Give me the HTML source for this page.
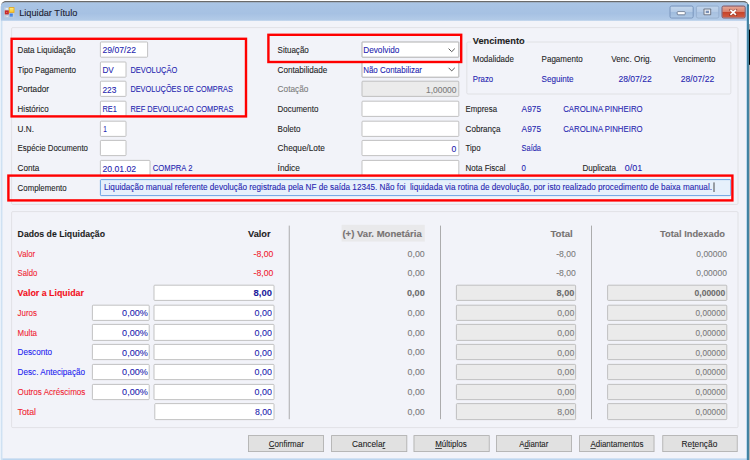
<!DOCTYPE html>
<html><head><meta charset="utf-8"><title>Liquidar Título</title>
<style>
html,body{margin:0;padding:0;background:#fff;overflow:hidden;}
body{width:750px;height:460px;position:relative;--bg:#f2f3f9;}
#root{position:absolute;left:0;top:0;width:937.5px;height:575.0px;transform:scale(0.8);transform-origin:0 0;font-family:"Liberation Sans",sans-serif;overflow:hidden;}
#root div,#root span,#root svg{position:absolute;}
#root span{white-space:pre;line-height:1;-webkit-text-stroke:0.12px currentColor;}
u{text-decoration:underline;text-underline-offset:1px;}
</style></head><body><div id="root">
<!-- window frame -->
<div style="left:935.75px;top:30.00px;width:2.50px;height:545.00px;background:#b9b3b3;"></div>
<div style="left:935.75px;top:36.88px;width:2.50px;height:44.38px;background:#000;"></div>
<div style="left:1.12px;top:1.12px;width:934.88px;height:587.50px;box-sizing:border-box;border-radius:6.88px 6.88px 0 0;background:#bdd6ef;border-top:2px solid #6a6a6a;"></div>
<div style="left:1.25px;top:3.00px;width:933.25px;height:23.38px;border-radius:5.62px 5.62px 0 0;background:linear-gradient(#aac5e5 0%,#a8c3e4 30%,#a6c1e3 60%,#b4cce8 100%);"></div>
<div style="left:933.12px;top:7.50px;width:1.25px;height:567.50px;background:#86c4ea;"></div>
<div style="left:934.25px;top:5.00px;width:1.75px;height:570.00px;background:#256e8e;border-radius:1.25px 3.75px 0 0;"></div>
<div style="left:1.12px;top:26.25px;width:2.25px;height:550.00px;background:linear-gradient(90deg,#c4dbf0,#dde9f6);"></div>
<div style="left:3.25px;top:26.25px;width:929.88px;height:546.75px;background:var(--bg);"></div>
<!-- icon -->
<div style="left:5.38px;top:8.75px;width:13.00px;height:13.00px;background:#c9d0da;opacity:.7;"></div>
<div style="left:7.00px;top:10.25px;width:2.75px;height:2.00px;background:#eef3f9;opacity:.8;"></div>
<div style="left:7.50px;top:19.50px;width:2.75px;height:1.50px;background:#eef3f9;opacity:.8;"></div>
<div style="left:11.25px;top:9.38px;width:6.88px;height:6.75px;background:#e9a60c;"></div>
<div style="left:12.25px;top:10.38px;width:4.88px;height:4.75px;background:linear-gradient(#fdeb82,#f7c52c);"></div>
<div style="left:6.25px;top:12.88px;width:4.38px;height:5.50px;background:#c7282a;"></div>
<div style="left:7.75px;top:14.88px;width:1.38px;height:1.38px;background:#f4b0a8;"></div>
<div style="left:11.50px;top:17.25px;width:4.50px;height:3.75px;background:linear-gradient(#3a74dc,#5c9cf0);"></div>
<!-- caption buttons -->
<div style="left:836.75px;top:6.75px;width:30.00px;height:16.62px;box-sizing:border-box;border:1px solid #6f8cb4;border-radius:2.5px;background:linear-gradient(#c3d6ec 0%,#b3cae6 48%,#9fbbdd 52%,#acc6e4 100%);"></div>
<div style="left:846.00px;top:14.38px;width:11.25px;height:4.88px;box-sizing:border-box;border:1px solid #5f6f86;border-radius:1.5px;background:#fff;"></div>
<div style="left:869.50px;top:6.75px;width:29.25px;height:16.62px;box-sizing:border-box;border:1px solid #93abc9;border-radius:2.5px;background:linear-gradient(#c1d4eb 0%,#b4cae6 48%,#a7c0e0 52%,#b0c8e5 100%);"></div>
<svg style="left:877.50px;top:8.75px;width:12.50px;height:12.50px" viewBox="0 0 10 10"><rect x="1.1" y="1.3" width="7.7" height="6.8" rx=".8" fill="#6e7686"/><rect x="2.1" y="2.3" width="5.7" height="4.8" fill="#eef1f5"/><rect x="3.3" y="3.5" width="3.3" height="2.4" fill="#7a90b6"/></svg>
<div style="left:901.62px;top:6.75px;width:30.25px;height:16.62px;box-sizing:border-box;border:1px solid #7c4048;border-radius:2.5px;background:linear-gradient(#e6a898 0%,#da826e 46%,#c5432a 52%,#d25c42 100%);"></div>
<svg style="left:911.25px;top:10.50px;width:11.00px;height:9.00px" viewBox="0 0 8.8 7.2"><path d="M1.5 1 L7.3 6.2 M7.3 1 L1.5 6.2" stroke="#6a281e" stroke-width="2.6" stroke-linecap="round" opacity=".5"/><path d="M1.6 1.1 L7.2 6.1 M7.2 1.1 L1.6 6.1" stroke="#fff" stroke-width="1.6" stroke-linecap="butt"/></svg>
<div style='left:13.75px;top:34.00px;width:909.00px;height:222.00px;box-sizing:border-box;border:1.25px solid #dcdce0;border-radius:2px;'></div>
<div style='left:13.75px;top:263.75px;width:908.75px;height:270.75px;box-sizing:border-box;border:1.25px solid #dcdce0;border-radius:2px;'></div>
<div style='left:125.25px;top:51.88px;width:59.50px;height:20.12px;box-sizing:border-box;border:1.25px solid #b4b4b4;border-radius:1.5px;background:#fff;'></div>
<div style='left:125.25px;top:76.50px;width:32.25px;height:20.13px;box-sizing:border-box;border:1.25px solid #b4b4b4;border-radius:1.5px;background:#fff;'></div>
<div style='left:125.25px;top:101.12px;width:32.25px;height:20.12px;box-sizing:border-box;border:1.25px solid #b4b4b4;border-radius:1.5px;background:#fff;'></div>
<div style='left:125.25px;top:125.75px;width:32.25px;height:20.12px;box-sizing:border-box;border:1.25px solid #b4b4b4;border-radius:1.5px;background:#fff;'></div>
<div style='left:125.25px;top:150.50px;width:32.25px;height:20.12px;box-sizing:border-box;border:1.25px solid #b4b4b4;border-radius:1.5px;background:#fff;'></div>
<div style='left:125.25px;top:175.25px;width:32.25px;height:20.12px;box-sizing:border-box;border:1.25px solid #b4b4b4;border-radius:1.5px;background:#fff;'></div>
<div style='left:125.25px;top:200.00px;width:62.75px;height:20.12px;box-sizing:border-box;border:1.25px solid #b4b4b4;border-radius:1.5px;background:#fff;'></div>
<div style='left:125.25px;top:224.12px;width:788.75px;height:21.00px;box-sizing:border-box;border:1.25px solid #4a8fdc;border-radius:1.5px;background:#e6f0fb;'></div>
<div style='left:891.50px;top:227.50px;width:1.12px;height:12.00px;background:#222;'></div>
<div style='left:451.50px;top:51.88px;width:122.00px;height:20.12px;box-sizing:border-box;border:1.25px solid #9c9c9c;border-radius:1px;background:#fff;'></div>
<div style='left:451.50px;top:76.50px;width:122.00px;height:20.13px;box-sizing:border-box;border:1.25px solid #9c9c9c;border-radius:1px;background:#fff;'></div>
<div style='left:451.50px;top:101.12px;width:122.00px;height:20.12px;box-sizing:border-box;border:1.25px solid #b4b4b4;border-radius:1.5px;background:#ebebeb;'></div>
<div style='left:451.50px;top:125.75px;width:122.00px;height:20.12px;box-sizing:border-box;border:1.25px solid #b4b4b4;border-radius:1.5px;background:#fff;'></div>
<div style='left:451.50px;top:150.50px;width:122.00px;height:20.12px;box-sizing:border-box;border:1.25px solid #b4b4b4;border-radius:1.5px;background:#fff;'></div>
<div style='left:451.50px;top:175.25px;width:122.00px;height:20.12px;box-sizing:border-box;border:1.25px solid #b4b4b4;border-radius:1.5px;background:#fff;'></div>
<div style='left:451.50px;top:200.00px;width:122.00px;height:20.12px;box-sizing:border-box;border:1.25px solid #b4b4b4;border-radius:1.5px;background:#fff;'></div>
<svg style='left:559.38px;top:58.62px;width:11.25px;height:7.50px' viewBox='0 0 9 6'><path d='M1.4 1.4 L4.5 4.5 L7.6 1.4' fill='none' stroke='#555' stroke-width='1'/></svg>
<svg style='left:559.38px;top:83.25px;width:11.25px;height:7.50px' viewBox='0 0 9 6'><path d='M1.4 1.4 L4.5 4.5 L7.6 1.4' fill='none' stroke='#555' stroke-width='1'/></svg>
<div style='left:583.00px;top:51.50px;width:330.75px;height:66.38px;box-sizing:border-box;border:1.25px solid #dcdce0;border-radius:2px;'></div>
<div style='left:588.75px;top:45.00px;width:69.38px;height:15.00px;background:var(--bg);'></div>
<div style='left:427.00px;top:281.25px;width:104.00px;height:20.50px;background:#e9e9eb;'></div>
<div style='left:360.81px;top:282.00px;width:1.50px;height:242.00px;background:#9a9a9a;'></div>
<div style='left:549.81px;top:282.00px;width:1.50px;height:242.00px;background:#9a9a9a;'></div>
<div style='left:738.81px;top:282.00px;width:1.50px;height:242.00px;background:#9a9a9a;'></div>
<div style='left:191.50px;top:355.94px;width:151.00px;height:20.13px;box-sizing:border-box;border:1.25px solid #b4b4b4;border-radius:1.5px;background:#fff;'></div>
<div style='left:570.00px;top:355.94px;width:150.25px;height:20.13px;box-sizing:border-box;border:1.25px solid #b4b4b4;border-radius:1.5px;background:#ebebeb;'></div>
<div style='left:758.75px;top:355.94px;width:150.25px;height:20.13px;box-sizing:border-box;border:1.25px solid #b4b4b4;border-radius:1.5px;background:#ebebeb;'></div>
<div style='left:191.50px;top:380.69px;width:151.00px;height:20.13px;box-sizing:border-box;border:1.25px solid #b4b4b4;border-radius:1.5px;background:#fff;'></div>
<div style='left:115.00px;top:380.69px;width:72.25px;height:20.13px;box-sizing:border-box;border:1.25px solid #b4b4b4;border-radius:1.5px;background:#fff;'></div>
<div style='left:570.00px;top:380.69px;width:150.25px;height:20.13px;box-sizing:border-box;border:1.25px solid #b4b4b4;border-radius:1.5px;background:#ebebeb;'></div>
<div style='left:758.75px;top:380.69px;width:150.25px;height:20.13px;box-sizing:border-box;border:1.25px solid #b4b4b4;border-radius:1.5px;background:#ebebeb;'></div>
<div style='left:191.50px;top:405.44px;width:151.00px;height:20.13px;box-sizing:border-box;border:1.25px solid #b4b4b4;border-radius:1.5px;background:#fff;'></div>
<div style='left:115.00px;top:405.44px;width:72.25px;height:20.13px;box-sizing:border-box;border:1.25px solid #b4b4b4;border-radius:1.5px;background:#fff;'></div>
<div style='left:570.00px;top:405.44px;width:150.25px;height:20.13px;box-sizing:border-box;border:1.25px solid #b4b4b4;border-radius:1.5px;background:#ebebeb;'></div>
<div style='left:758.75px;top:405.44px;width:150.25px;height:20.13px;box-sizing:border-box;border:1.25px solid #b4b4b4;border-radius:1.5px;background:#ebebeb;'></div>
<div style='left:191.50px;top:430.19px;width:151.00px;height:20.13px;box-sizing:border-box;border:1.25px solid #b4b4b4;border-radius:1.5px;background:#fff;'></div>
<div style='left:115.00px;top:430.19px;width:72.25px;height:20.13px;box-sizing:border-box;border:1.25px solid #b4b4b4;border-radius:1.5px;background:#fff;'></div>
<div style='left:570.00px;top:430.19px;width:150.25px;height:20.13px;box-sizing:border-box;border:1.25px solid #b4b4b4;border-radius:1.5px;background:#ebebeb;'></div>
<div style='left:758.75px;top:430.19px;width:150.25px;height:20.13px;box-sizing:border-box;border:1.25px solid #b4b4b4;border-radius:1.5px;background:#ebebeb;'></div>
<div style='left:191.50px;top:454.94px;width:151.00px;height:20.13px;box-sizing:border-box;border:1.25px solid #b4b4b4;border-radius:1.5px;background:#fff;'></div>
<div style='left:115.00px;top:454.94px;width:72.25px;height:20.13px;box-sizing:border-box;border:1.25px solid #b4b4b4;border-radius:1.5px;background:#fff;'></div>
<div style='left:570.00px;top:454.94px;width:150.25px;height:20.13px;box-sizing:border-box;border:1.25px solid #b4b4b4;border-radius:1.5px;background:#ebebeb;'></div>
<div style='left:758.75px;top:454.94px;width:150.25px;height:20.13px;box-sizing:border-box;border:1.25px solid #b4b4b4;border-radius:1.5px;background:#ebebeb;'></div>
<div style='left:191.50px;top:479.69px;width:151.00px;height:20.13px;box-sizing:border-box;border:1.25px solid #b4b4b4;border-radius:1.5px;background:#fff;'></div>
<div style='left:115.00px;top:479.69px;width:72.25px;height:20.13px;box-sizing:border-box;border:1.25px solid #b4b4b4;border-radius:1.5px;background:#fff;'></div>
<div style='left:570.00px;top:479.69px;width:150.25px;height:20.13px;box-sizing:border-box;border:1.25px solid #b4b4b4;border-radius:1.5px;background:#ebebeb;'></div>
<div style='left:758.75px;top:479.69px;width:150.25px;height:20.13px;box-sizing:border-box;border:1.25px solid #b4b4b4;border-radius:1.5px;background:#ebebeb;'></div>
<div style='left:193.00px;top:504.44px;width:149.50px;height:20.13px;box-sizing:border-box;border:1.25px solid #b4b4b4;border-radius:1.5px;background:#fff;'></div>
<div style='left:570.00px;top:504.44px;width:150.25px;height:20.13px;box-sizing:border-box;border:1.25px solid #b4b4b4;border-radius:1.5px;background:#ebebeb;'></div>
<div style='left:758.75px;top:504.44px;width:150.25px;height:20.13px;box-sizing:border-box;border:1.25px solid #b4b4b4;border-radius:1.5px;background:#ebebeb;'></div>
<div style='left:310.38px;top:544.12px;width:94.87px;height:21.00px;box-sizing:border-box;border:1.25px solid #adadad;background:#e1e1e1;'></div>
<div style='left:413.75px;top:544.12px;width:95.00px;height:21.00px;box-sizing:border-box;border:1.25px solid #adadad;background:#e1e1e1;'></div>
<div style='left:517.25px;top:544.12px;width:94.87px;height:21.00px;box-sizing:border-box;border:1.25px solid #adadad;background:#e1e1e1;'></div>
<div style='left:620.38px;top:544.12px;width:94.50px;height:21.00px;box-sizing:border-box;border:1.25px solid #adadad;background:#e1e1e1;'></div>
<div style='left:723.75px;top:544.12px;width:94.63px;height:21.00px;box-sizing:border-box;border:1.25px solid #adadad;background:#e1e1e1;'></div>
<div style='left:827.75px;top:544.12px;width:94.25px;height:21.00px;box-sizing:border-box;border:1.25px solid #adadad;background:#e1e1e1;'></div>
<div style='left:13.00px;top:46.88px;width:295.75px;height:100.00px;box-sizing:border-box;border:3px solid #ff0000;'></div>
<div style='left:9.38px;top:218.12px;width:907.62px;height:34.38px;box-sizing:border-box;border:3px solid #ff0000;'></div>
<div style='left:333.75px;top:42.00px;width:244.25px;height:37.00px;box-sizing:border-box;border:3px solid #ff0000;'></div>
<span style='left:22.00px;transform-origin:0 0;top:57.04px;font-size:11.25px;color:#1e1e1e;font-weight:400;transform:scaleX(0.8901);'>Data Liquidação</span>
<span style='left:22.00px;transform-origin:0 0;top:81.66px;font-size:11.25px;color:#1e1e1e;font-weight:400;transform:scaleX(0.8887);'>Tipo Pagamento</span>
<span style='left:22.00px;transform-origin:0 0;top:106.29px;font-size:11.25px;color:#1e1e1e;font-weight:400;transform:scaleX(0.9095);'>Portador</span>
<span style='left:22.00px;transform-origin:0 0;top:130.91px;font-size:11.25px;color:#1e1e1e;font-weight:400;transform:scaleX(0.8854);'>Histórico</span>
<span style='left:22.00px;transform-origin:0 0;top:155.66px;font-size:11.25px;color:#1e1e1e;font-weight:400;transform:scaleX(0.9111);'>U.N.</span>
<span style='left:22.00px;transform-origin:0 0;top:180.41px;font-size:11.25px;color:#1e1e1e;font-weight:400;transform:scaleX(0.8740);'>Espécie Documento</span>
<span style='left:22.00px;transform-origin:0 0;top:205.16px;font-size:11.25px;color:#1e1e1e;font-weight:400;transform:scaleX(0.9074);'>Conta</span>
<span style='left:22.00px;transform-origin:0 0;top:229.54px;font-size:11.25px;color:#1e1e1e;font-weight:400;transform:scaleX(0.8744);'>Complemento</span>
<span style='left:128.00px;transform-origin:0 0;top:57.41px;font-size:11.25px;color:#261fb0;font-weight:400;transform:scaleX(0.9590);'>29/07/22</span>
<span style='left:127.75px;transform-origin:0 0;top:82.04px;font-size:11.25px;color:#261fb0;font-weight:400;transform:scaleX(0.9111);'>DV</span>
<span style='left:128.00px;transform-origin:0 0;top:106.66px;font-size:11.25px;color:#261fb0;font-weight:400;transform:scaleX(0.9318);'>223</span>
<span style='left:127.75px;transform-origin:0 0;top:131.29px;font-size:11.25px;color:#261fb0;font-weight:400;transform:scaleX(0.8223);'>RE1</span>
<span style='left:128.75px;transform-origin:0 0;top:156.04px;font-size:11.25px;color:#261fb0;font-weight:400;transform:scaleX(0.7182);'>1</span>
<span style='left:128.25px;transform-origin:0 0;top:205.54px;font-size:11.25px;color:#261fb0;font-weight:400;transform:scaleX(0.9647);'>20.01.02</span>
<span style='left:163.25px;transform-origin:0 0;top:81.66px;font-size:11.25px;color:#261fb0;font-weight:400;transform:scaleX(0.8280);'>DEVOLUÇÃO</span>
<span style='left:163.25px;transform-origin:0 0;top:106.29px;font-size:11.25px;color:#261fb0;font-weight:400;transform:scaleX(0.8157);'>DEVOLUÇÕES DE COMPRAS</span>
<span style='left:163.25px;transform-origin:0 0;top:130.91px;font-size:11.25px;color:#261fb0;font-weight:400;transform:scaleX(0.8238);'>REF DEVOLUCAO COMPRAS</span>
<span style='left:191.25px;transform-origin:0 0;top:205.16px;font-size:11.25px;color:#261fb0;font-weight:400;transform:scaleX(0.8514);'>COMPRA 2</span>
<span style='left:129.50px;transform-origin:0 0;top:229.29px;font-size:11.25px;color:#261fb0;font-weight:400;transform:scaleX(0.9075);'>Liquidação manual referente devolução registrada pela NF de saída 12345. Não foi  liquidada via rotina de devolução, por isto realizado procedimento de baixa manual.</span>
<span style='left:346.50px;transform-origin:0 0;top:57.04px;font-size:11.25px;color:#1e1e1e;font-weight:400;transform:scaleX(0.8908);'>Situação</span>
<span style='left:346.50px;transform-origin:0 0;top:81.66px;font-size:11.25px;color:#1e1e1e;font-weight:400;transform:scaleX(0.9046);'>Contabilidade</span>
<span style='left:346.50px;transform-origin:0 0;top:106.29px;font-size:11.25px;color:#7c7c7c;font-weight:400;transform:scaleX(0.9187);'>Cotação</span>
<span style='left:346.50px;transform-origin:0 0;top:130.91px;font-size:11.25px;color:#1e1e1e;font-weight:400;transform:scaleX(0.8865);'>Documento</span>
<span style='left:346.50px;transform-origin:0 0;top:155.66px;font-size:11.25px;color:#1e1e1e;font-weight:400;transform:scaleX(0.8932);'>Boleto</span>
<span style='left:346.50px;transform-origin:0 0;top:180.41px;font-size:11.25px;color:#1e1e1e;font-weight:400;transform:scaleX(0.9156);'>Cheque/Lote</span>
<span style='left:346.50px;transform-origin:0 0;top:205.16px;font-size:11.25px;color:#1e1e1e;font-weight:400;transform:scaleX(0.9240);'>Índice</span>
<span style='left:454.00px;transform-origin:0 0;top:57.04px;font-size:11.25px;color:#261fb0;font-weight:400;transform:scaleX(0.9159);'>Devolvido</span>
<span style='left:454.00px;transform-origin:0 0;top:81.66px;font-size:11.25px;color:#261fb0;font-weight:400;transform:scaleX(0.8837);'>Não Contabilizar</span>
<span style='right:366.75px;transform-origin:100% 0;top:106.66px;font-size:11.25px;color:#7c7c7c;font-weight:400;transform:scaleX(0.9405);'>1,00000</span>
<span style='right:366.75px;transform-origin:100% 0;top:180.79px;font-size:11.25px;color:#261fb0;font-weight:400;transform:scaleX(0.9576);'>0</span>
<span style='left:590.75px;transform-origin:0 0;top:46.35px;font-size:11.25px;color:#1e1e1e;font-weight:700;transform:scaleX(1.0252);'>Vencimento</span>
<span style='left:590.75px;transform-origin:0 0;top:68.85px;font-size:11.25px;color:#1e1e1e;font-weight:400;transform:scaleX(0.8810);'>Modalidade</span>
<span style='left:677.00px;transform-origin:0 0;top:68.85px;font-size:11.25px;color:#1e1e1e;font-weight:400;transform:scaleX(0.8906);'>Pagamento</span>
<span style='left:763.75px;transform-origin:0 0;top:68.85px;font-size:11.25px;color:#1e1e1e;font-weight:400;transform:scaleX(0.9118);'>Venc. Orig.</span>
<span style='left:841.50px;transform-origin:0 0;top:68.85px;font-size:11.25px;color:#1e1e1e;font-weight:400;transform:scaleX(0.8887);'>Vencimento</span>
<span style='left:590.75px;transform-origin:0 0;top:93.85px;font-size:11.25px;color:#261fb0;font-weight:400;transform:scaleX(0.8676);'>Prazo</span>
<span style='left:677.00px;transform-origin:0 0;top:93.85px;font-size:11.25px;color:#261fb0;font-weight:400;transform:scaleX(0.9005);'>Seguinte</span>
<span style='left:772.75px;transform-origin:0 0;top:93.85px;font-size:11.25px;color:#261fb0;font-weight:400;transform:scaleX(0.9533);'>28/07/22</span>
<span style='left:850.75px;transform-origin:0 0;top:93.85px;font-size:11.25px;color:#261fb0;font-weight:400;transform:scaleX(0.9533);'>28/07/22</span>
<span style='left:582.00px;transform-origin:0 0;top:130.91px;font-size:11.25px;color:#1e1e1e;font-weight:400;transform:scaleX(0.8716);'>Empresa</span>
<span style='left:582.00px;transform-origin:0 0;top:155.66px;font-size:11.25px;color:#1e1e1e;font-weight:400;transform:scaleX(0.8969);'>Cobrança</span>
<span style='left:582.00px;transform-origin:0 0;top:180.41px;font-size:11.25px;color:#1e1e1e;font-weight:400;transform:scaleX(0.8734);'>Tipo</span>
<span style='left:582.00px;transform-origin:0 0;top:205.16px;font-size:11.25px;color:#1e1e1e;font-weight:400;transform:scaleX(0.8884);'>Nota Fiscal</span>
<span style='left:652.00px;transform-origin:0 0;top:130.91px;font-size:11.25px;color:#261fb0;font-weight:400;transform:scaleX(0.9227);'>A975</span>
<span style='left:652.00px;transform-origin:0 0;top:155.66px;font-size:11.25px;color:#261fb0;font-weight:400;transform:scaleX(0.9227);'>A975</span>
<span style='left:652.00px;transform-origin:0 0;top:180.41px;font-size:11.25px;color:#261fb0;font-weight:400;transform:scaleX(0.8247);'>Saída</span>
<span style='left:652.00px;transform-origin:0 0;top:205.16px;font-size:11.25px;color:#261fb0;font-weight:400;transform:scaleX(0.8778);'>0</span>
<span style='left:703.75px;transform-origin:0 0;top:130.91px;font-size:11.25px;color:#261fb0;font-weight:400;transform:scaleX(0.8675);'>CAROLINA PINHEIRO</span>
<span style='left:703.75px;transform-origin:0 0;top:155.66px;font-size:11.25px;color:#261fb0;font-weight:400;transform:scaleX(0.8675);'>CAROLINA PINHEIRO</span>
<span style='left:727.50px;transform-origin:0 0;top:205.16px;font-size:11.25px;color:#1e1e1e;font-weight:400;transform:scaleX(0.8954);'>Duplicata</span>
<span style='left:780.75px;transform-origin:0 0;top:205.16px;font-size:11.25px;color:#261fb0;font-weight:400;transform:scaleX(0.9929);'>0/01</span>
<span style='left:22.00px;transform-origin:0 0;top:286.85px;font-size:11.25px;color:#1e1e1e;font-weight:700;transform:scaleX(0.9655);'>Dados de Liquidação</span>
<span style='left:310.00px;transform-origin:0 0;top:286.85px;font-size:11.25px;color:#1e1e1e;font-weight:700;transform:scaleX(1.0267);'>Valor</span>
<span style='left:427.50px;transform-origin:0 0;top:286.85px;font-size:11.25px;color:#777373;font-weight:700;transform:scaleX(1.0617);'>(+) Var. Monetária</span>
<span style='left:687.50px;transform-origin:0 0;top:286.85px;font-size:11.25px;color:#777373;font-weight:700;transform:scaleX(1.0750);'>Total</span>
<span style='left:825.00px;transform-origin:0 0;top:286.85px;font-size:11.25px;color:#777373;font-weight:700;transform:scaleX(1.0344);'>Total Indexado</span>
<span style='left:22.00px;transform-origin:0 0;top:311.60px;font-size:11.25px;color:#f02432;font-weight:400;transform:scaleX(0.8550);'>Valor</span>
<span style='right:596.25px;transform-origin:100% 0;top:311.60px;font-size:11.25px;color:#f02432;font-weight:400;transform:scaleX(0.9647);'>-8,00</span>
<span style='right:407.00px;transform-origin:100% 0;top:311.60px;font-size:11.25px;color:#7c7c7c;font-weight:400;transform:scaleX(0.9815);'>0,00</span>
<span style='right:218.00px;transform-origin:100% 0;top:311.60px;font-size:11.25px;color:#7c7c7c;font-weight:400;transform:scaleX(0.9549);'>-8,00</span>
<span style='right:29.25px;transform-origin:100% 0;top:311.60px;font-size:11.25px;color:#7c7c7c;font-weight:400;transform:scaleX(0.9405);'>0,00000</span>
<span style='left:22.00px;transform-origin:0 0;top:336.35px;font-size:11.25px;color:#f02432;font-weight:400;transform:scaleX(0.8599);'>Saldo</span>
<span style='right:596.25px;transform-origin:100% 0;top:336.35px;font-size:11.25px;color:#f02432;font-weight:400;transform:scaleX(0.9647);'>-8,00</span>
<span style='right:407.00px;transform-origin:100% 0;top:336.35px;font-size:11.25px;color:#7c7c7c;font-weight:400;transform:scaleX(0.9815);'>0,00</span>
<span style='right:218.00px;transform-origin:100% 0;top:336.35px;font-size:11.25px;color:#7c7c7c;font-weight:400;transform:scaleX(0.9549);'>-8,00</span>
<span style='right:29.25px;transform-origin:100% 0;top:336.35px;font-size:11.25px;color:#7c7c7c;font-weight:400;transform:scaleX(0.9405);'>0,00000</span>
<span style='left:22.00px;transform-origin:0 0;top:361.10px;font-size:11.25px;color:#f2101c;font-weight:700;transform:scaleX(0.9833);'>Valor a Liquidar</span>
<span style='right:407.00px;transform-origin:100% 0;top:361.10px;font-size:11.25px;color:#6c6c6c;font-weight:700;transform:scaleX(1.0157);'>0,00</span>
<span style='right:597.50px;transform-origin:100% 0;top:361.48px;font-size:11.25px;color:#1c1c9c;font-weight:700;transform:scaleX(1.0499);'>8,00</span>
<span style='right:220.00px;transform-origin:100% 0;top:361.48px;font-size:11.25px;color:#6c6c6c;font-weight:700;transform:scaleX(1.0157);'>8,00</span>
<span style='right:31.25px;transform-origin:100% 0;top:361.48px;font-size:11.25px;color:#6c6c6c;font-weight:700;transform:scaleX(0.9466);'>0,00000</span>
<span style='left:22.00px;transform-origin:0 0;top:385.85px;font-size:11.25px;color:#f02432;font-weight:400;transform:scaleX(0.8813);'>Juros</span>
<span style='right:407.00px;transform-origin:100% 0;top:385.85px;font-size:11.25px;color:#7c7c7c;font-weight:400;transform:scaleX(0.9815);'>0,00</span>
<span style='right:597.50px;transform-origin:100% 0;top:386.23px;font-size:11.25px;color:#261fb0;font-weight:400;transform:scaleX(0.9929);'>0,00</span>
<span style='right:752.50px;transform-origin:100% 0;top:386.23px;font-size:11.25px;color:#261fb0;font-weight:400;transform:scaleX(1.0108);'>0,00%</span>
<span style='right:220.00px;transform-origin:100% 0;top:386.23px;font-size:11.25px;color:#7c7c7c;font-weight:400;transform:scaleX(0.9757);'>0,00</span>
<span style='right:31.25px;transform-origin:100% 0;top:386.23px;font-size:11.25px;color:#7c7c7c;font-weight:400;transform:scaleX(0.9159);'>0,00000</span>
<span style='left:22.00px;transform-origin:0 0;top:410.60px;font-size:11.25px;color:#f02432;font-weight:400;transform:scaleX(0.8813);'>Multa</span>
<span style='right:407.00px;transform-origin:100% 0;top:410.60px;font-size:11.25px;color:#7c7c7c;font-weight:400;transform:scaleX(0.9815);'>0,00</span>
<span style='right:597.50px;transform-origin:100% 0;top:410.98px;font-size:11.25px;color:#261fb0;font-weight:400;transform:scaleX(0.9929);'>0,00</span>
<span style='right:752.50px;transform-origin:100% 0;top:410.98px;font-size:11.25px;color:#261fb0;font-weight:400;transform:scaleX(1.0108);'>0,00%</span>
<span style='right:220.00px;transform-origin:100% 0;top:410.98px;font-size:11.25px;color:#7c7c7c;font-weight:400;transform:scaleX(0.9757);'>0,00</span>
<span style='right:31.25px;transform-origin:100% 0;top:410.98px;font-size:11.25px;color:#7c7c7c;font-weight:400;transform:scaleX(0.9159);'>0,00000</span>
<span style='left:22.00px;transform-origin:0 0;top:435.35px;font-size:11.25px;color:#1c1cf0;font-weight:400;transform:scaleX(0.9047);'>Desconto</span>
<span style='right:407.00px;transform-origin:100% 0;top:435.35px;font-size:11.25px;color:#7c7c7c;font-weight:400;transform:scaleX(0.9815);'>0,00</span>
<span style='right:597.50px;transform-origin:100% 0;top:435.73px;font-size:11.25px;color:#261fb0;font-weight:400;transform:scaleX(0.9929);'>0,00</span>
<span style='right:752.50px;transform-origin:100% 0;top:435.73px;font-size:11.25px;color:#261fb0;font-weight:400;transform:scaleX(1.0108);'>0,00%</span>
<span style='right:220.00px;transform-origin:100% 0;top:435.73px;font-size:11.25px;color:#7c7c7c;font-weight:400;transform:scaleX(0.9757);'>0,00</span>
<span style='right:31.25px;transform-origin:100% 0;top:435.73px;font-size:11.25px;color:#7c7c7c;font-weight:400;transform:scaleX(0.9159);'>0,00000</span>
<span style='left:22.00px;transform-origin:0 0;top:460.10px;font-size:11.25px;color:#1c1cf0;font-weight:400;transform:scaleX(0.9041);'>Desc. Antecipação</span>
<span style='right:407.00px;transform-origin:100% 0;top:460.10px;font-size:11.25px;color:#7c7c7c;font-weight:400;transform:scaleX(0.9815);'>0,00</span>
<span style='right:597.50px;transform-origin:100% 0;top:460.48px;font-size:11.25px;color:#261fb0;font-weight:400;transform:scaleX(0.9929);'>0,00</span>
<span style='right:752.50px;transform-origin:100% 0;top:460.48px;font-size:11.25px;color:#261fb0;font-weight:400;transform:scaleX(1.0108);'>0,00%</span>
<span style='right:220.00px;transform-origin:100% 0;top:460.48px;font-size:11.25px;color:#7c7c7c;font-weight:400;transform:scaleX(0.9757);'>0,00</span>
<span style='right:31.25px;transform-origin:100% 0;top:460.48px;font-size:11.25px;color:#7c7c7c;font-weight:400;transform:scaleX(0.9159);'>0,00000</span>
<span style='left:22.00px;transform-origin:0 0;top:484.85px;font-size:11.25px;color:#f02432;font-weight:400;transform:scaleX(0.8977);'>Outros Acréscimos</span>
<span style='right:407.00px;transform-origin:100% 0;top:484.85px;font-size:11.25px;color:#7c7c7c;font-weight:400;transform:scaleX(0.9815);'>0,00</span>
<span style='right:597.50px;transform-origin:100% 0;top:485.23px;font-size:11.25px;color:#261fb0;font-weight:400;transform:scaleX(0.9929);'>0,00</span>
<span style='right:752.50px;transform-origin:100% 0;top:485.23px;font-size:11.25px;color:#261fb0;font-weight:400;transform:scaleX(1.0108);'>0,00%</span>
<span style='right:220.00px;transform-origin:100% 0;top:485.23px;font-size:11.25px;color:#7c7c7c;font-weight:400;transform:scaleX(0.9757);'>0,00</span>
<span style='right:31.25px;transform-origin:100% 0;top:485.23px;font-size:11.25px;color:#7c7c7c;font-weight:400;transform:scaleX(0.9159);'>0,00000</span>
<span style='left:22.00px;transform-origin:0 0;top:509.60px;font-size:11.25px;color:#f02432;font-weight:400;transform:scaleX(0.9678);'>Total</span>
<span style='right:407.00px;transform-origin:100% 0;top:509.60px;font-size:11.25px;color:#7c7c7c;font-weight:400;transform:scaleX(0.9815);'>0,00</span>
<span style='right:597.50px;transform-origin:100% 0;top:509.98px;font-size:11.25px;color:#261fb0;font-weight:400;transform:scaleX(0.9700);'>8,00</span>
<span style='right:220.00px;transform-origin:100% 0;top:509.98px;font-size:11.25px;color:#7c7c7c;font-weight:400;transform:scaleX(0.9757);'>8,00</span>
<span style='right:31.25px;transform-origin:100% 0;top:509.98px;font-size:11.25px;color:#7c7c7c;font-weight:400;transform:scaleX(0.9159);'>0,00000</span>
<span style='left:335.50px;transform-origin:0 0;top:549.73px;font-size:11.25px;color:#1e1e1e;font-weight:400;transform:scaleX(0.8858);'><u>C</u>onfirmar</span>
<span style='left:440.38px;transform-origin:0 0;top:549.73px;font-size:11.25px;color:#1e1e1e;font-weight:400;transform:scaleX(0.9244);'>Cancela<u>r</u></span>
<span style='left:544.25px;transform-origin:0 0;top:549.73px;font-size:11.25px;color:#1e1e1e;font-weight:400;transform:scaleX(0.8895);'><u>M</u>últiplos</span>
<span style='left:648.88px;transform-origin:0 0;top:549.73px;font-size:11.25px;color:#1e1e1e;font-weight:400;transform:scaleX(0.8674);'>A<u>d</u>iantar</span>
<span style='left:737.62px;transform-origin:0 0;top:549.73px;font-size:11.25px;color:#1e1e1e;font-weight:400;transform:scaleX(0.8843);'><u>A</u>diantamentos</span>
<span style='left:851.63px;transform-origin:0 0;top:549.73px;font-size:11.25px;color:#1e1e1e;font-weight:400;transform:scaleX(0.9261);'>Re<u>t</u>enção</span>
<span style='left:23.63px;transform-origin:0 0;top:10.01px;font-size:12.25px;color:#1a1a30;font-weight:400;transform:scaleX(0.9382);'>Liquidar Título</span>
</div></body></html>
